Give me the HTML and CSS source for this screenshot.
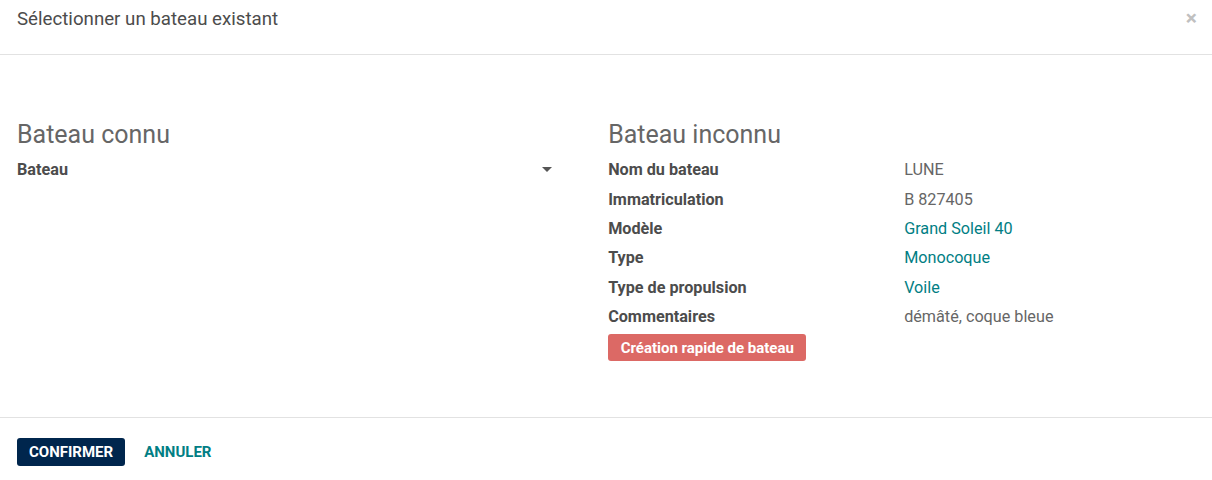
FILE: index.html
```html
<!DOCTYPE html>
<html lang="fr">
<head>
<meta charset="utf-8">
<link rel="stylesheet" href="styles.css">
</head>
<body>
<div class="modal">
  <header class="modal-header">
    <h4 class="modal-title">Sélectionner un bateau existant</h4>
    <span class="close">×</span>
  </header>
  <main class="modal-body">
    <div class="group">
      <h3 class="group-title">Bateau connu</h3>
      <div class="row">
        <span class="label">Bateau</span>
        <span class="field select"><span class="caret"></span></span>
      </div>
    </div>
    <div class="group">
      <h3 class="group-title">Bateau inconnu</h3>
      <div class="row"><span class="label">Nom du bateau</span><span class="field">LUNE</span></div>
      <div class="row"><span class="label">Immatriculation</span><span class="field">B 827405</span></div>
      <div class="row"><span class="label">Modèle</span><span class="field link">Grand Soleil 40</span></div>
      <div class="row"><span class="label">Type</span><span class="field link">Monocoque</span></div>
      <div class="row"><span class="label">Type de propulsion</span><span class="field link">Voile</span></div>
      <div class="row"><span class="label">Commentaires</span><span class="field">démâté, coque bleue</span></div>
      <div class="actions"><button class="btn btn-red">Création rapide de bateau</button></div>
    </div>
  </main>
  <footer class="modal-footer">
    <button class="btn btn-primary">CONFIRMER</button>
    <button class="btn btn-link">ANNULER</button>
  </footer>
</div>
</body>
</html>
```
FILE: styles.css
```css
* { box-sizing: border-box; }
html, body { margin: 0; padding: 0; background: #fff; }
body { font-family: Roboto, "Noto Sans", sans-serif; font-size: 16.2px; color: #4c4c4c; }
.modal { width: 1212px; height: 480px; display: flex; flex-direction: column; }
.modal-header { height: 55px; border-bottom: 1px solid #e2e2e2; display: flex; align-items: flex-start; justify-content: space-between; padding: 7px 15px 0 17px; }
.modal-title { margin: 0; font-size: 18.7px; font-weight: 400; line-height: 24px; color: #4c4c4c; }
.close { font-size: 21px; line-height: 18px; color: #c0c0c0; font-weight: 700; margin-top: 2px; }
.modal-body { height: 363px; display: flex; padding: 65px 17px 0 17px; border-bottom: 1px solid #e2e2e2; }
.group { width: 590px; }
.group:first-child { width: 594px; padding-right: 50px; }
.group-title { margin: 0 0 5px 0; font-size: 25px; font-weight: 400; line-height: 30px; color: #666; }
.row { display: flex; height: 29.4px; align-items: center; }
.label { width: 296px; font-weight: 700; color: #4c4c4c; flex: none; }
.group:first-child .label { width: auto; flex: 1; }
.field { flex: 1; color: #666; }
.field.link { color: #017e84; }
.field.select { flex: none; width: 20px; display: flex; justify-content: flex-end; }
.caret { width: 0; height: 0; border-left: 5px solid transparent; border-right: 5px solid transparent; border-top: 5px solid #555; margin-right: 6px; }
.actions { padding-top: 3px; }
.btn { font-family: Roboto, "Noto Sans", sans-serif; font-size: 15px; font-weight: 700; border: 0; border-radius: 3px; cursor: pointer; line-height: 20px; }
.btn-red { background: #dc6965; color: #fff; height: 27px; padding: 0 12.5px; }
.modal-footer { flex: 1; display: flex; align-items: flex-start; padding: 20px 17px 0; gap: 7px; }
.btn-primary { background: #00264d; color: #fff; height: 28px; padding: 0 12px; }
.btn-link { background: transparent; color: #017e84; height: 28px; padding: 0 12px; }
```
